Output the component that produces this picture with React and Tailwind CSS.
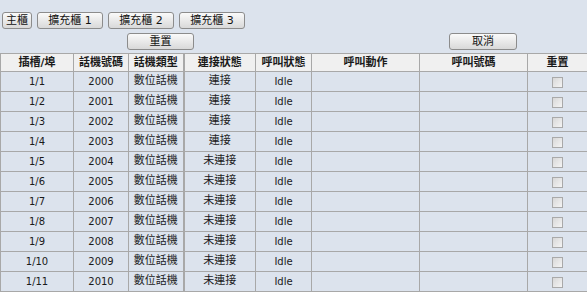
import React from 'react'

const cjk = { fontFamily: '"DejaVu Sans", "Noto Sans CJK TC", sans-serif' }

const rows = Array.from({ length: 11 }, (_, i) => ({
  slot: `1/${i + 1}`,
  ext: String(2000 + i),
  type: '數位話機',
  link: i < 4 ? '連接' : '未連接',
  state: 'Idle',
}))

const Btn = ({ children, className = '' }) => (
  <button
    className={`h-[17px] border border-[#8c8c8c] rounded-[3px] bg-gradient-to-b from-[#fafafa] to-[#d9d9d9] text-[11px] leading-[15px] text-[#111] ${className}`}
  >
    {children}
  </button>
)

const Box = () => (
  <span className="inline-block w-[11px] h-[11px] border border-[#a9a9a9] bg-gradient-to-br from-[#d8d8d8] to-[#f4f4f4] align-middle" />
)

const heads = ['插槽/埠', '話機號碼', '話機類型', '連接狀態', '呼叫狀態', '呼叫動作', '呼叫號碼', '重置']
const widths = ['w-[73px]', 'w-[55px]', 'w-[55px]', 'w-[72px]', 'w-[56px]', 'w-[108px]', 'w-[108px]', 'w-[60px]']

export default function App() {
  return (
    <div className="w-[587px] h-[292px] bg-[#dce3ed] overflow-hidden text-[#1a1a1a]" style={cjk}>
      <div className="flex gap-[5px] pt-[12px] pl-[2px]">
        <Btn className="w-[30px]">主櫃</Btn>
        <Btn className="w-[66px]">擴充櫃 1</Btn>
        <Btn className="w-[66px]">擴充櫃 2</Btn>
        <Btn className="w-[66px]">擴充櫃 3</Btn>
      </div>
      <div className="flex mt-[4px]">
        <Btn className="w-[67px] ml-[127px]">重置</Btn>
        <Btn className="w-[68px] ml-[255px]">取消</Btn>
      </div>
      <table className="mt-[3px] border-collapse table-fixed w-[587px]">
        <thead>
          <tr className="h-[18px] bg-[#f0f0f0]">
            {heads.map((h, i) => (
              <th
                key={h}
                className={`${widths[i]} border border-[#a8a8a8] p-0 text-[11px] font-bold leading-[16px] text-center ${i === 2 ? 'border-r-2' : ''}`}
              >
                {h}
              </th>
            ))}
          </tr>
        </thead>
        <tbody>
          {rows.map((r) => (
            <tr key={r.slot} className="h-[20px]">
              <td className="border border-[#a8a8a8] p-0 text-center text-[10px]">{r.slot}</td>
              <td className="border border-[#a8a8a8] p-0 text-center text-[10px]">{r.ext}</td>
              <td className="border border-[#a8a8a8] border-r-2 p-0 text-center text-[11px]">{r.type}</td>
              <td className="border border-[#a8a8a8] p-0 text-center text-[11px]">{r.link}</td>
              <td className="border border-[#a8a8a8] p-0 text-center text-[10px]">{r.state}</td>
              <td className="border border-[#a8a8a8] p-0" />
              <td className="border border-[#a8a8a8] p-0" />
              <td className="border border-[#a8a8a8] p-0 text-center leading-none">
                <Box />
              </td>
            </tr>
          ))}
        </tbody>
      </table>
    </div>
  )
}
